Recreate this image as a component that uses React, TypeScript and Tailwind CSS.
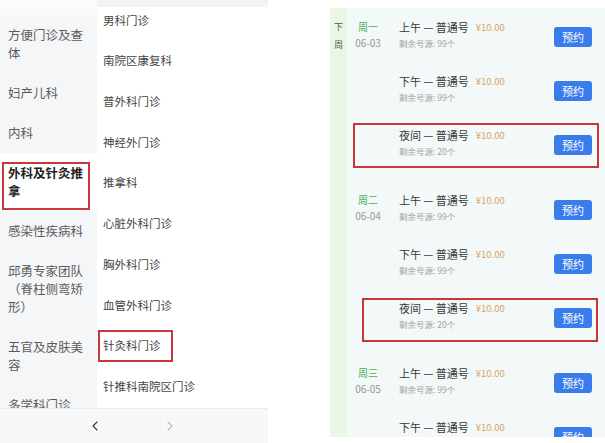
import { ChevronLeft, ChevronRight } from "lucide-react";

const cats = [
  "方便门诊及查体",
  "妇产儿科",
  "内科",
  "外科及针灸推拿",
  "感染性疾病科",
  "邱勇专家团队（脊柱侧弯矫形）",
  "五官及皮肤美容",
  "多学科门诊",
];

const subs = [
  "男科门诊",
  "南院区康复科",
  "普外科门诊",
  "神经外门诊",
  "推拿科",
  "心脏外科门诊",
  "胸外科门诊",
  "血管外科门诊",
  "针灸科门诊",
  "针推科南院区门诊",
];

type Slot = { name: string; left: number; box?: string };

const days: { week: string; date: string; slots: Slot[] }[] = [
  {
    week: "周一",
    date: "06-03",
    slots: [
      { name: "上午", left: 99 },
      { name: "下午", left: 99 },
      { name: "夜间", left: 20, box: "top-[5px] h-[45px] left-[6px] right-[6px]" },
    ],
  },
  {
    week: "周二",
    date: "06-04",
    slots: [
      { name: "上午", left: 99 },
      { name: "下午", left: 99 },
      { name: "夜间", left: 20, box: "top-[7px] h-[44px] left-[15px] right-[7px]" },
    ],
  },
  {
    week: "周三",
    date: "06-05",
    slots: [
      { name: "上午", left: 99 },
      { name: "下午", left: 99 },
    ],
  },
];

export default function App() {
  return (
    <div className="w-[605px] h-[443px] flex bg-white overflow-hidden font-['Noto_Sans_CJK_SC','Noto_Sans',sans-serif]">
      {/* department picker */}
      <div className="w-[268px] h-full flex flex-col">
        <div className="flex-1 flex overflow-hidden">
          <div className="w-[97px] bg-[#f5f6f8] flex flex-col overflow-hidden">
            <div className="h-[15px] shrink-0 bg-[#fbfbfc] overflow-hidden px-[8px]">
              <div className="-mt-[15px] text-[12.5px] leading-[18px] text-[#bbb]">内科</div>
            </div>
            {cats.map((c) => {
              const active = c === "外科及针灸推拿";
              return (
                <div
                  key={c}
                  className={
                    "relative shrink-0 pl-[8px] pr-[8px] py-[11px] text-[12.5px] leading-[18px] " +
                    (active ? "bg-white font-bold text-[#222]" : "text-[#5a5a5a]")
                  }
                >
                  {c}
                  {active && (
                    <div className="absolute left-[2px] right-[7px] top-[9px] bottom-[1px] border-2 border-[#c8383a]" />
                  )}
                </div>
              );
            })}
          </div>
          <div className="flex-1 bg-[linear-gradient(to_bottom,#f2f3f5_0,#f2f3f5_7px,#ffffff_7px)] flex flex-col overflow-hidden">
            {subs.map((s) => (
              <div
                key={s}
                className="relative h-[40.7px] shrink-0 flex items-center px-[6px] text-[11.5px] text-[#444]"
              >
                {s}
                {s === "针灸科门诊" && (
                  <div className="absolute left-[1px] top-[4px] w-[75px] h-[32px] border-2 border-[#c8383a]" />
                )}
              </div>
            ))}
          </div>
        </div>
        <div className="h-[35px] shrink-0 bg-[#f7f8f9] border-t border-[#ebebeb] flex items-center">
          <ChevronLeft className="ml-[87px] w-[16px] h-[16px] text-[#333]" strokeWidth={1.6} />
          <ChevronRight className="ml-[59px] w-[16px] h-[16px] text-[#bbb]" strokeWidth={1.6} />
        </div>
      </div>

      <div className="w-[62px]" />

      {/* schedule */}
      <div className="w-[275px] mt-[8px] h-[429px] flex bg-[#f3f8f8] overflow-hidden">
        <div className="w-[17px] shrink-0 bg-[#eaf7e4] flex flex-col items-center pt-[10px] text-[9px] leading-[18px] text-[#555]">
          <span>下</span>
          <span>周</span>
        </div>
        <div className="flex-1 pt-[2px] flex flex-col gap-[11px]">
          {days.map((d) => (
            <div key={d.week} className="flex flex-col">
              {d.slots.map((s, i) => (
                <div key={s.name} className="relative h-[54px] shrink-0 flex items-start pt-[10px]">
                  <div className="w-[42px] shrink-0 flex flex-col items-center">
                    {i === 0 && (
                      <>
                        <span className="text-[10px] leading-[14px] text-[#4cae4f]">{d.week}</span>
                        <span className="mt-[3px] text-[10px] leading-[12px] text-[#999]">{d.date}</span>
                      </>
                    )}
                  </div>
                  <div className="flex-1 pl-[10px] flex flex-col">
                    <div className="flex items-center">
                      <span className="text-[11px] leading-[14px] text-[#383838]">{s.name} — 普通号</span>
                      <span className="ml-[7px] text-[9.5px] leading-[14px] text-[#d6a460]">¥10.00</span>
                    </div>
                    <span className="mt-[3px] text-[8.5px] leading-[12px] text-[#a3a3a3]">
                      剩余号源: {s.left}个
                    </span>
                  </div>
                  <button className="mt-[7px] mr-[13px] w-[38px] h-[20px] rounded-[3px] bg-[#3b7cec] text-white text-[11px] leading-[20px]">
                    预约
                  </button>
                  {s.box && <div className={"absolute border-2 border-[#c8383a] " + s.box} />}
                </div>
              ))}
            </div>
          ))}
        </div>
      </div>
    </div>
  );
}
